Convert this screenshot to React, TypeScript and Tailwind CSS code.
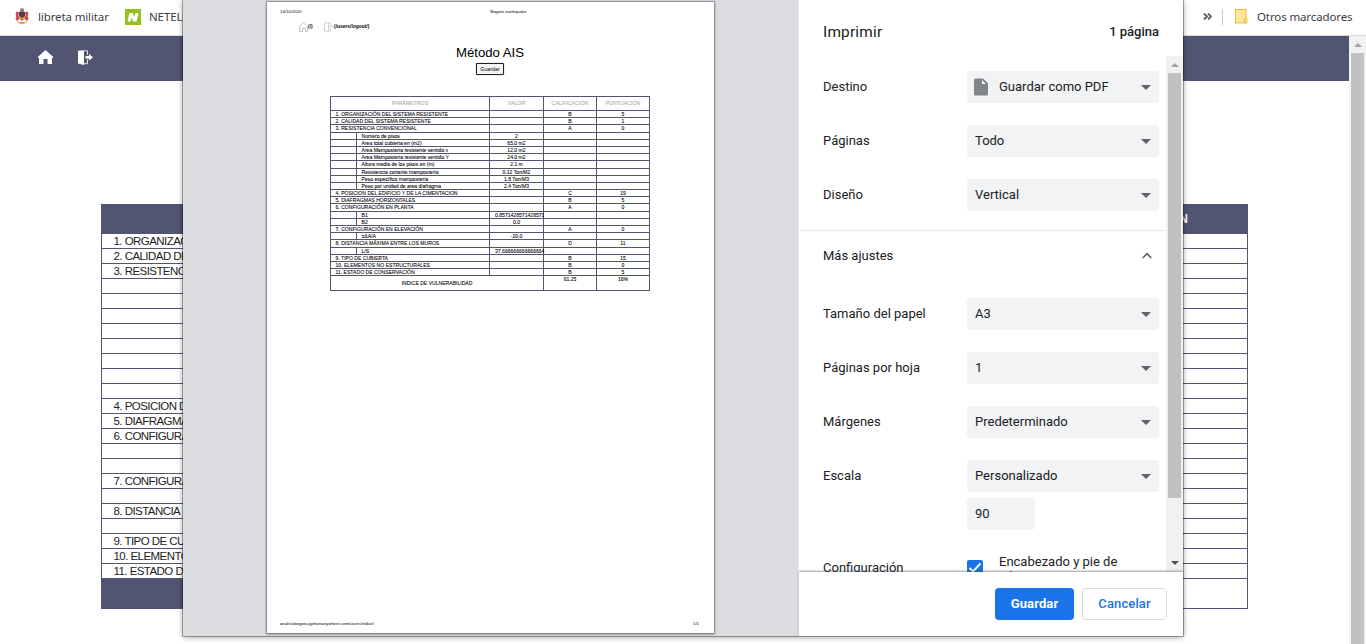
import type { ReactNode } from "react";

const behindRows = [
  "1. ORGANIZACIÓN DEL SISTEMA", "2. CALIDAD DEL SISTEMA", "3. RESISTENCIA CONVENCIONAL",
  "", "", "", "", "", "", "", "",
  "4. POSICION DEL EDIFICIO", "5. DIAFRAGMAS HORIZONTALES", "6. CONFIGURACIÓN EN PLANTA",
  "", "", "7. CONFIGURACIÓN EN ELEVACIÓN", "", "8. DISTANCIA MÁXIMA", "",
  "9. TIPO DE CUBIERTA", "10. ELEMENTOS NO ESTRUCTURALES", "11. ESTADO DE CONSERVACIÓN",
];

type Row = { name: string; sub?: boolean; value?: string; grade?: string; score?: string; tall?: boolean };

const rows: Row[] = [
  { name: "1. ORGANIZACIÓN DEL SISTEMA RESISTENTE", grade: "B", score: "5" },
  { name: "2. CALIDAD DEL SISTEMA RESISTENTE", grade: "B", score: "1" },
  { name: "3. RESISTENCIA CONVENCIONAL", grade: "A", score: "0", tall: true },
  { name: "Numero de pisos", sub: true, value: "2" },
  { name: "Area total cubierta en (m2)", sub: true, value: "65.0 m2" },
  { name: "Area Mamposteria resistente sentido x", sub: true, value: "12.0 m2" },
  { name: "Area Mamposteria resistente sentido Y", sub: true, value: "24.0 m2" },
  { name: "Altura media de los pisos en (m)", sub: true, value: "2.1 m", tall: true },
  { name: "Resistencia cortante mampostería", sub: true, value: "0.12 Ton/M2" },
  { name: "Peso específico mampostería", sub: true, value: "1.8 Ton/M3" },
  { name: "Peso por unidad de area diafragma", sub: true, value: "2.4 Ton/M3" },
  { name: "4. POSICION DEL EDIFICIO Y DE LA CIMENTACION", grade: "C", score: "19" },
  { name: "5. DIAFRAGMAS HORIZONTALES", grade: "B", score: "5" },
  { name: "6. CONFIGURACIÓN EN PLANTA", grade: "A", score: "0", tall: true },
  { name: "B1", sub: true, value: "0.8571428571428571" },
  { name: "B2", sub: true, value: "0.0" },
  { name: "7. CONFIGURACIÓN EN ELEVACIÓN", grade: "A", score: "0" },
  { name: "±ΔA/A", sub: true, value: "-20.0" },
  { name: "8. DISTANCIA MÁXIMA ENTRE LOS MUROS", grade: "D", score: "11", tall: true },
  { name: "L/S", sub: true, value: "37.666666666666664" },
  { name: "9. TIPO DE CUBIERTA", grade: "B", score: "15" },
  { name: "10. ELEMENTOS NO ESTRUCTURALES", grade: "B", score: "0" },
  { name: "11. ESTADO DE CONSERVACIÓN", grade: "B", score: "5" },
];

function ArrowUp() {
  return (
    <svg width="8" height="4" viewBox="0 0 8 4" className="block">
      <path d="M4 0L8 4H0Z" fill="#a3a3a3" />
    </svg>
  );
}

function BookmarksBar() {
  return (
    <div className="flex h-9 items-center justify-between border-b border-[#dadce0] bg-white font-['Noto_Sans',sans-serif] text-[11.500px] tracking-[-0.120px] text-[#3c4043]">
      <div className="flex items-center pb-0.5">
        <svg width="14" height="17" viewBox="0 0 14 17" className="ml-[15px] block">
          <path d="M1.500 3.500l2.500.5-.5 3 .8 4-2.300 2-1.500-2 .8-3-.8-2zM12.500 3.500L10 4l.5 3-.8 4 2.300 2 1.500-2-.8-3 .8-2z" fill="#d8445a" />
          <path d="M4 4h6v6l-3 3-3-3z" fill="#4a3d56" />
          <path d="M4 8l3 2 3-2v2l-3 2-3-2z" fill="#e0a23a" />
          <path d="M5 1l2-1 2 1v3H5z" fill="#8c8676" />
          <path d="M2 13c2 3.500 8 3.500 10 0" fill="none" stroke="#e5c05c" strokeWidth="1.200" />
          <path d="M4.500 14c2 1.200 3 1.200 5 0" fill="none" stroke="#c96d4d" />
        </svg>
        <span className="ml-[9px] w-[87px] whitespace-nowrap">libreta militar</span>
        <svg width="16" height="16" viewBox="0 0 16 16" className="block">
          <rect width="16" height="16" fill="#95c11f" />
          <path d="M2.500 12.500L4.500 4h3.200l1.800 4 1-4H13.500l-2 8.500H8.300L6.500 8.500l-1 4z" fill="#fff" />
        </svg>
        <span className="ml-2 whitespace-nowrap">NETELLER</span>
      </div>
      <div className="flex items-center pb-0.5">
        <svg width="9" height="7" viewBox="0 0 9 7" className="block">
          <path d="M1 .5l3 3-3 3M5 .5l3 3-3 3" fill="none" stroke="#5f6368" strokeWidth="1.9" />
        </svg>
        <div className="ml-2.5 h-4 w-px bg-[#c8cacd]" />
        <svg width="13" height="15" viewBox="0 0 13 15" className="ml-3 block">
          <rect x=".5" y=".5" width="10.500" height="13.500" fill="#ffe79a" stroke="#e8bd3c" />
          <rect x="9.500" y="9.500" width="2.500" height="4.500" rx=".5" fill="#ffe79a" stroke="#e8bd3c" />
        </svg>
        <span className="ml-[9px] w-[109px] whitespace-nowrap">Otros marcadores</span>
      </div>
    </div>
  );
}

function SiteBehind() {
  return (
    <div className="flex h-[608px] font-['Liberation_Sans',sans-serif]">
      <div className="flex-1">
        <div className="flex h-[45px] items-center bg-[#525572] pb-[3px] pl-[38px]">
          <svg width="15" height="14" viewBox="0 0 15 14" className="block">
            <path d="M7.500 0L15 6.800V8h-1v6H9.500V9h-4v5H1V8H0V6.800z" fill="#fff" />
          </svg>
          <svg width="15" height="15" viewBox="0 0 15 15" className="ml-[25px] block">
            <path d="M0 .5L6 1v14L0 13.500z" fill="#fff" />
            <path d="M3 .8h6.500v4M9.500 9.500v4.200H6" fill="none" stroke="#e8e8ee" />
            <path d="M7.500 6h3.500V4l4 3.200-4 3.200V8.500H7.500z" fill="#fff" />
          </svg>
        </div>
        <div className="mt-[123px] ml-[101px] w-[1147px]">
          <div className="flex h-[30px] items-center justify-end bg-[#525572] pr-[60px] text-[12px] font-bold text-white">PUNTUACIÓN</div>
          <div className="border-x border-[#525572]">
            {behindRows.map((r, i) => (
              <div key={i} className="h-[15px] border-b border-[#525572] pl-[11.500px] text-[11.500px] leading-[15px] tracking-[-0.550px] whitespace-nowrap text-[#222]">{r}</div>
            ))}
          </div>
          <div className="flex h-[30px] border-r border-b border-[#525572]">
            <div className="w-[700px] bg-[#525572]" />
          </div>
        </div>
      </div>
      <div className="flex w-[17px] flex-col items-center bg-[#f1f1f1] pt-[7px]">
        <ArrowUp />
        <div className="mt-1.5 w-[13px] flex-1 bg-[#c1c1c1]" />
      </div>
    </div>
  );
}

function Cell({ className, children }: { className: string; children?: ReactNode }) {
  return (
    <div className={`flex shrink-0 items-center border-r border-[#525572] pt-px whitespace-nowrap ${className}`}>
      {children}
    </div>
  );
}

function VulnerabilityTable() {
  return (
    <div className="mt-[21px] ml-[63px] w-[320px] border-t border-l border-[#525572] text-[5.080px] leading-none text-black [-webkit-text-stroke:0.080px_currentColor]">
      <div className="flex h-[14px] border-b border-[#525572] text-[5.250px] text-[#aaa]">
        <Cell className="w-[159px] justify-center">PARÁMETROS</Cell>
        <Cell className="w-[54px] justify-center">VALOR</Cell>
        <Cell className="w-[53px] justify-center">CALIFICACIÓN</Cell>
        <Cell className="w-[53px] justify-center">PUNTUACIÓN</Cell>
      </div>
      {rows.map((r) => (
        <div key={r.name} className={`flex border-b border-[#525572] ${r.tall ? "h-2" : "h-[7px]"}`}>
          {r.sub ? (
            <>
              <Cell className="w-[26px]" />
              <Cell className="w-[133px] pl-[4.500px]">{r.name}</Cell>
            </>
          ) : (
            <Cell className="w-[159px] pl-[4.500px]">{r.name}</Cell>
          )}
          <Cell className={`w-[54px] ${r.value && r.value.length > 12 ? "pl-[5px]" : "justify-center"}`}>{r.value}</Cell>
          <Cell className="w-[53px] justify-center">{r.grade}</Cell>
          <Cell className="w-[53px] justify-center">{r.score}</Cell>
        </div>
      ))}
      <div className="flex h-[15px] border-b border-[#525572]">
        <Cell className="w-[213px] justify-center">INDICE DE VULNERABILIDAD</Cell>
        <Cell className="w-[53px] justify-center pb-[7px]">61.25</Cell>
        <Cell className="w-[53px] justify-center pb-[7px]">16%</Cell>
      </div>
    </div>
  );
}

function Paper() {
  return (
    <div className="mt-0.5 ml-[84px] flex h-[631px] w-[447px] flex-col bg-white font-['Liberation_Sans',sans-serif] text-black shadow-[0_0_1px_1px_rgba(90,90,100,0.45),0_1px_3px_rgba(0,0,0,0.4)]">
      <div className="grid grid-cols-3 px-[13px] pt-[7px] text-[4.300px] leading-[5px]">
        <span>14/10/2020</span>
        <span className="pl-[36px] text-center whitespace-nowrap">Bogotá earthquake</span>
        <span />
      </div>
      <div className="mt-[7px] ml-8 flex h-[11px] items-center text-[4.900px] font-bold">
        <svg width="9" height="10" viewBox="0 0 9 10" className="block">
          <path d="M.5 4.500L4.500.8l4 3.700V9.500h-2V6h-3v3.500H.5z" fill="none" stroke="#aaa" strokeWidth=".7" />
        </svg>
        <span className="w-[16px]">(/)</span>
        <svg width="10" height="10" viewBox="0 0 10 10" className="block">
          <path d="M.5.8h4v8.700l-4-.7zM4.500 1.200h1.800v2M4.500 8.500h1.800V6M5 4.500h1.800L8 3.200l1 1.500L8 6" fill="none" stroke="#bbb" strokeWidth=".7" />
        </svg>
        <span>(/users/logout/)</span>
      </div>
      <div className="mt-[12px] -ml-px text-center text-[13.200px] leading-[18px]">Método AIS</div>
      <div className="mt-px ml-[209px] flex h-[12px] w-[28px] items-center justify-center rounded-[1px] border border-[#222] bg-[#f4f4f4] pt-px text-[5.300px] leading-none shadow-[0_0_1px_#555]">Guardar</div>
      <VulnerabilityTable />
      <div className="mt-auto flex justify-between pr-[15px] pb-[6px] pl-[13px] text-[4.280px] leading-[6px]">
        <span>analisisbogota.pythonanywhere.com/users/indice/</span>
        <span>1/1</span>
      </div>
    </div>
  );
}

function Caret() {
  return (
    <svg width="10" height="5" viewBox="0 0 10 5" className="block">
      <path d="M0 0h10L5 5z" fill="#5f6368" />
    </svg>
  );
}

function Setting({ label, value, icon }: { label: string; value: string; icon?: boolean }) {
  return (
    <div className="mb-[22px] flex h-8 items-center">
      <div className="w-36">{label}</div>
      <div className="flex h-8 w-48 items-center rounded bg-[#f1f3f4] px-2">
        {icon && (
          <svg width="14" height="18" viewBox="0 0 14 18" className="mr-[11px] -ml-px block">
            <path d="M2 .5h7L14 5v11a1.500 1.500 0 0 1-1.500 1.500h-11A1.500 1.500 0 0 1 0 16V2A1.500 1.500 0 0 1 2 .5z" fill="#80868b" />
            <path d="M8 2v4h4z" fill="#f1f3f4" />
          </svg>
        )}
        <span className="flex-1 whitespace-nowrap">{value}</span>
        <Caret />
      </div>
    </div>
  );
}

function Sidebar() {
  return (
    <div className="flex w-[385px] flex-col border-l border-[#e8eaed] bg-white font-[Roboto,sans-serif] text-[13px] text-[#202124]">
      <div className="flex h-[56px] shrink-0 items-center justify-between pt-2 pr-6 pl-6">
        <span className="pt-px text-[15.400px] tracking-[0.200px]">Imprimir</span>
        <span className="font-medium">1 página</span>
      </div>
      <div className="flex h-[516px] shrink-0 overflow-hidden">
        <div className="w-[367px] shrink-0">
          <div className="h-[175px] border-b border-[#e8eaed] pt-[15px] pl-6">
            <Setting label="Destino" value="Guardar como PDF" icon />
            <Setting label="Páginas" value="Todo" />
            <Setting label="Diseño" value="Vertical" />
          </div>
          <div className="flex h-[49px] items-center justify-between pr-[14px] pl-6">
            <span>Más ajustes</span>
            <svg width="10" height="7" viewBox="0 0 10 7" className="block">
              <path d="M.7 6L5 1.700 9.300 6" fill="none" stroke="#5f6368" strokeWidth="1.700" />
            </svg>
          </div>
          <div className="pt-[18px] pl-6">
            <Setting label="Tamaño del papel" value="A3" />
            <Setting label="Páginas por hoja" value="1" />
            <Setting label="Márgenes" value="Predeterminado" />
            <Setting label="Escala" value="Personalizado" />
            <div className="-mt-4 ml-36 flex h-8 w-[68px] items-center rounded bg-[#f1f3f4] px-2">90</div>
            <div className="mt-[21px] flex">
              <div className="w-36 pt-[7px]">Configuración</div>
              <div className="mt-[9px] flex size-4 items-center justify-center rounded-[2px] bg-[#1a73e8]">
                <svg width="14" height="12" viewBox="0 0 14 12" className="block">
                  <path d="M1.500 6l3.500 3.500 7.500-8" fill="none" stroke="#fff" strokeWidth="1.900" />
                </svg>
              </div>
              <div className="ml-4 w-[140px] pt-[3px] leading-[15px]">Encabezado y pie de página</div>
            </div>
          </div>
        </div>
        <div className="flex w-[17px] shrink-0 flex-col items-center bg-[#f1f1f1] pt-[7px]">
          <ArrowUp />
          <div className="mt-1.5 h-[425px] w-[13px] shrink-0 bg-[#c1c1c1]" />
          <svg width="8" height="4" viewBox="0 0 8 4" className="mt-[63px] block shrink-0">
            <path d="M0 0h8L4 4z" fill="#505050" />
          </svg>
        </div>
      </div>
      <div className="z-10 flex flex-1 items-center justify-end gap-2 bg-white pr-4 font-medium tracking-[0.130px] shadow-[0_-1px_2px_rgba(60,64,67,0.5)]">
        <div className="flex h-8 w-[79px] items-center justify-center rounded bg-[#1a73e8] font-bold text-white">Guardar</div>
        <div className="flex h-8 w-[85px] items-center justify-center rounded border border-[#dadce0] text-[#1a73e8]">Cancelar</div>
      </div>
    </div>
  );
}

export default function App() {
  return (
    <div className="relative h-[644px] w-[1366px] overflow-hidden bg-white">
      <BookmarksBar />
      <SiteBehind />
      <div className="absolute top-0 left-[183px] flex h-[636px] w-[1000px] bg-[#dadce0] shadow-[0_0_0_1px_rgba(0,0,0,0.3),0_1px_6px_rgba(0,0,0,0.4)]">
        <div className="w-[615px]">
          <Paper />
        </div>
        <Sidebar />
      </div>
    </div>
  );
}
